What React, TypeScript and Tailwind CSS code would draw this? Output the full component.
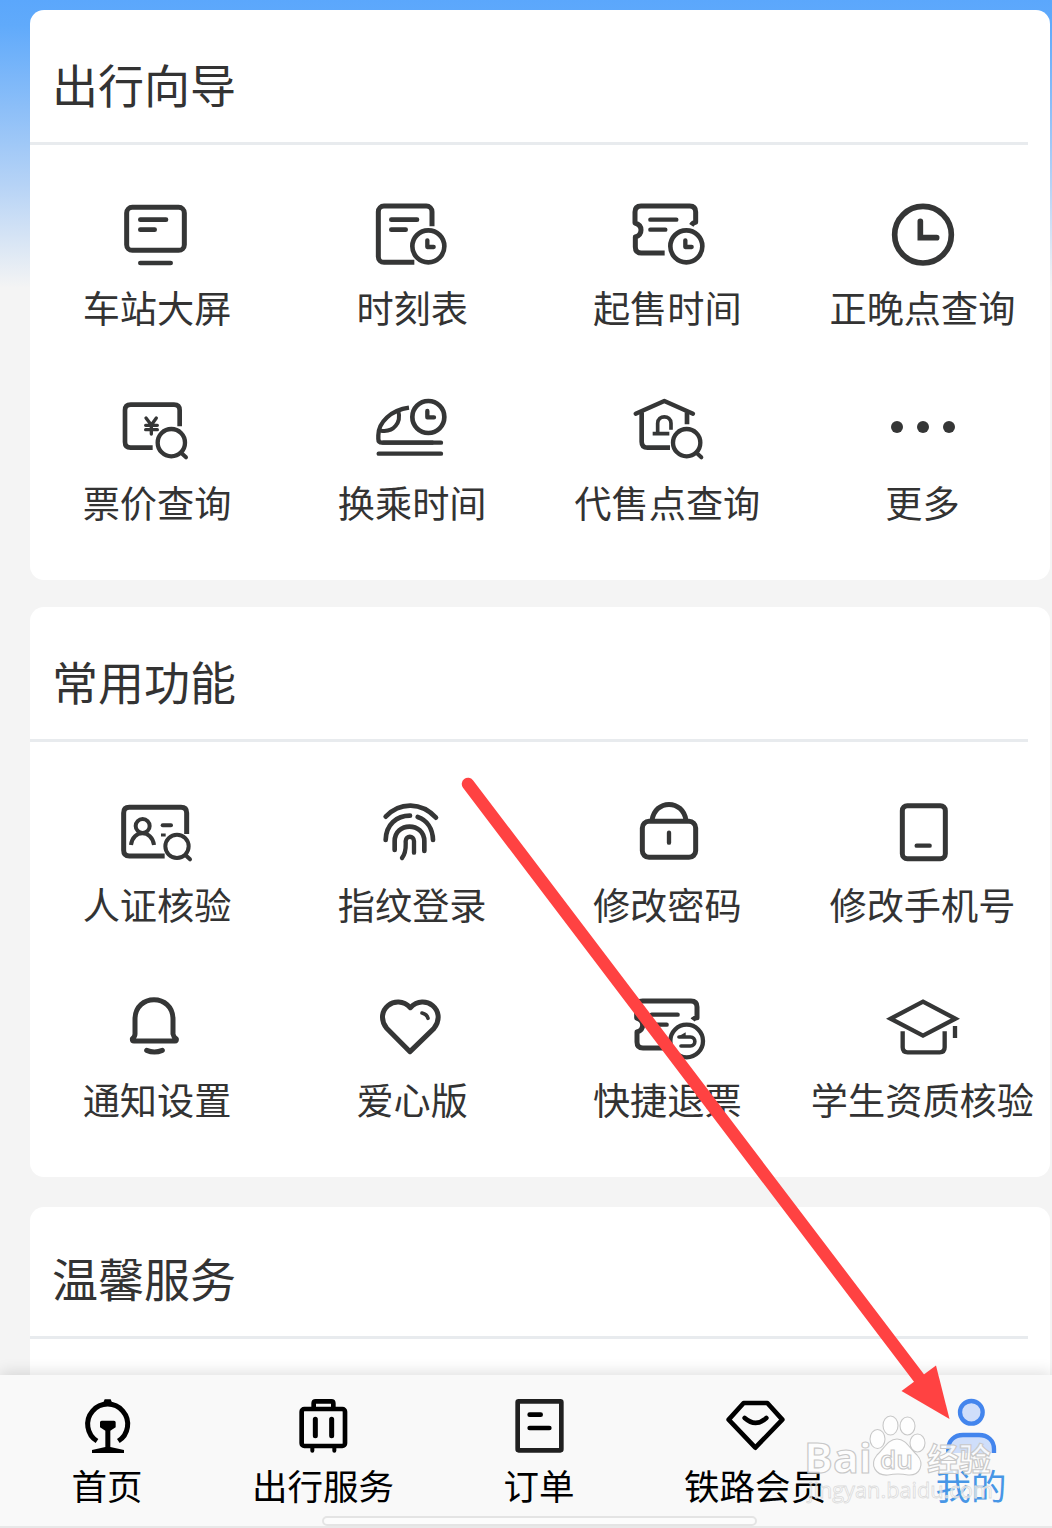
import type { ReactNode } from 'react';

type Item = { label: string; icon: ReactNode };

function Icon({ viewBox, children }: { viewBox: string; children: ReactNode }) {
  return (
    <svg
      className="h-[90px] w-24 text-[#353636]"
      viewBox={viewBox}
      fill="none"
      stroke="currentColor"
      strokeWidth="15"
      strokeLinecap="round"
      strokeLinejoin="round"
    >
      {children}
    </svg>
  );
}

const guideItems: Item[] = [
  {
    label: '车站大屏',
    icon: (
      <Icon viewBox="27 0 288 270">
        <rect x="80" y="52" width="173" height="129" rx="17" />
        <path strokeWidth="14" d="M121 89h77M121 119h43M121 219h91" />
      </Icon>
    ),
  },
  {
    label: '时刻表',
    icon: (
      <Icon viewBox="792 0 288 270">
        <path strokeLinecap="butt" d="M943 217H852a17 17 0 0 1-17-17V65a17 17 0 0 1 17-17H979a17 17 0 0 1 17 17V109" />
        <path strokeWidth="14" d="M874 89h77M874 119h43" />
        <circle cx="985" cy="169" r="48" strokeWidth="14" />
        <path strokeWidth="13" d="M982 151v20h19" />
      </Icon>
    ),
  },
  {
    label: '起售时间',
    icon: (
      <Icon viewBox="57 0 288 270">
        <path
          strokeLinecap="butt"
          d="M194 189H124q-18 0-18-18V141Q123 136 123 120T105 99V66q0-18 18-18H269q18 0 18 18V97q-8 1-13 9"
        />
        <path strokeWidth="13" d="M151 89h78M151 119h45" />
        <circle cx="259" cy="169" r="48" strokeWidth="14" />
        <path strokeWidth="13" d="M256 151v20h19" />
      </Icon>
    ),
  },
  {
    label: '正晚点查询',
    icon: (
      <Icon viewBox="823 0 288 270">
        <circle cx="970" cy="134" r="85" strokeWidth="17" />
        <path strokeWidth="17" strokeLinejoin="miter" d="M962 94v49h49" />
      </Icon>
    ),
  },
  {
    label: '票价查询',
    icon: (
      <Icon viewBox="27 0 288 270">
        <path strokeLinecap="butt" strokeWidth="14" d="M158 188H92q-17 0-17-17V76q0-17 17-17H222q17 0 17 17V124" />
        <path strokeWidth="10" d="M138 99l16 21 15-21M154 120v27M137 121h35M137 134h35" />
        <circle cx="214" cy="173" r="41" strokeWidth="13" />
        <path strokeWidth="12" d="M244 204l14 13" />
      </Icon>
    ),
  },
  {
    label: '换乘时间',
    icon: (
      <Icon viewBox="792 0 288 270">
        <path strokeLinecap="butt" strokeWidth="13" d="M927 68C873 75 835 112 835 151V162q0 11 11 11H1000" />
        <path strokeWidth="13" d="M850 173H1023M836 206H1023" />
        <path strokeWidth="12" d="M843 137C882 143 904 112 895 78" />
        <circle cx="985" cy="96" r="48" strokeWidth="14" />
        <path strokeWidth="13" d="M982 78v19h20" />
      </Icon>
    ),
  },
  {
    label: '代售点查询',
    icon: (
      <Icon viewBox="57 0 288 270">
        <path strokeWidth="13" d="M107 86L193 48L279 86" />
        <path strokeLinecap="butt" strokeWidth="14" d="M125 82V170q0 18 18 18H210M261 82V118" />
        <path strokeWidth="11" strokeLinecap="butt" d="M158 146H208M173 146V115c0-26 40-26 40 0V134" />
        <circle cx="260" cy="173" r="41" strokeWidth="13" />
        <path strokeWidth="12" d="M290 204l14 13" />
      </Icon>
    ),
  },
  {
    label: '更多',
    icon: (
      <Icon viewBox="823 0 288 270">
        <g fill="currentColor" stroke="none">
          <circle cx="892" cy="126" r="18" />
          <circle cx="970" cy="126" r="18" />
          <circle cx="1048" cy="126" r="18" />
        </g>
      </Icon>
    ),
  },
];

const commonItems: Item[] = [
  {
    label: '人证核验',
    icon: (
      <Icon viewBox="27 -9 288 270">
        <path strokeLinecap="butt" d="M194 198H88q-17 0-17-17V69q0-17 17-17H243q17 0 17 17V132" />
        <g strokeWidth="12">
          <circle cx="128" cy="108" r="21" />
          <path strokeLinecap="butt" d="M93 165C98 118 156 118 162 165" />
          <path d="M188 106h25" />
          <path strokeLinecap="butt" strokeWidth="9" d="M183 135h14" />
          <circle cx="231" cy="169" r="35" />
          <path d="M257 196l13 12" />
        </g>
      </Icon>
    ),
  },
  {
    label: '指纹登录',
    icon: (
      <Icon viewBox="792 -9 288 270">
        <g strokeWidth="14">
          <path d="M857 80C900 35 964 36 1008 83" />
          <path d="M857 150C858 103 890 77 930 77M953 81C980 90 998 115 999 150" />
          <path d="M884 180V154C884 95 973 95 973 154V183" />
          <path strokeWidth="13" d="M906 204C920 187 917 169 917 153C917 136 942 136 942 153V188" />
        </g>
      </Icon>
    ),
  },
  {
    label: '修改密码',
    icon: (
      <Icon viewBox="57 -9 288 270">
        <rect x="127" y="94" width="160" height="108" rx="20" />
        <path strokeLinecap="butt" d="M156 92C164 27 250 27 258 92" />
        <path strokeWidth="13" d="M207 128v30" />
      </Icon>
    ),
  },
  {
    label: '修改手机号',
    icon: (
      <Icon viewBox="823 -9 288 270">
        <rect x="908" y="47" width="129" height="159" rx="15" />
        <path strokeWidth="13" d="M951 167h39" />
      </Icon>
    ),
  },
  {
    label: '通知设置',
    icon: (
      <Icon viewBox="27 -9 288 270">
        <path d="M105 147V103C105 25 219 25 219 103V147Q220 155 229 162Q230 168 225 168H102Q97 168 97 162Q105 155 105 147Z" />
        <path d="M140 196Q163 206 187 196" />
      </Icon>
    ),
  },
  {
    label: '爱心版',
    icon: (
      <Icon viewBox="792 -9 288 270">
        <path d="M930 200L860 130C819 76 888 23 931 68C974 23 1043 76 1002 130Z" />
        <path strokeWidth="11" d="M966 84Q981 87 984 100" />
      </Icon>
    ),
  },
  {
    label: '快捷退票',
    icon: (
      <Icon viewBox="57 -9 288 270">
        <path
          strokeLinecap="butt"
          d="M198 189H129q-18 0-18-18V141Q128 136 128 120T110 99V66q0-18 18-18H273q18 0 18 18V98q-8 0-13 7"
        />
        <path strokeWidth="13" d="M155 89h78M155 119h45" />
        <circle cx="260" cy="168" r="49" strokeWidth="13" />
        <path strokeWidth="11" d="M237 156H271C289 156 289 183 271 183H243" />
        <path fill="currentColor" stroke="none" d="M231 157L257 142V157Z" />
      </Icon>
    ),
  },
  {
    label: '学生资质核验',
    icon: (
      <Icon viewBox="823 -9 288 270">
        <g strokeLinecap="butt" strokeWidth="13">
          <path strokeLinejoin="miter" d="M970 50L1067 101L970 152L873 101Z" />
          <path d="M909 139V187q0 15 15 15H1020q15 0 15-15V139M1066 123V159" />
        </g>
      </Icon>
    ),
  },
];

function NavIcon({ viewBox, children }: { viewBox: string; children: ReactNode }) {
  return (
    <svg
      className="h-[70px] w-20"
      viewBox={viewBox}
      fill="none"
      stroke="currentColor"
      strokeWidth="15"
      strokeLinecap="round"
      strokeLinejoin="round"
    >
      {children}
    </svg>
  );
}

const tabs: Item[] = [
  {
    label: '首页',
    icon: (
      <NavIcon viewBox="51 84 240 210">
        <path strokeLinecap="butt" d="M141 243A60 60 0 1 1 205 243" />
        <path
          fill="currentColor"
          stroke="none"
          d="M158 132L164 118H182L188 132ZM150 187q0-5 5-5H192q5 0 5 5V202L181 212V261L222 270V279H126V270L166 261V212L150 202Z"
        />
      </NavIcon>
    ),
  },
  {
    label: '出行服务',
    icon: (
      <NavIcon viewBox="699 84 240 210">
        <rect x="755" y="147" width="130" height="111" rx="8" strokeWidth="14" />
        <path strokeLinecap="butt" strokeWidth="14" d="M791 144V130q0-6 6-6H844q6 0 6 6V144" />
        <path d="M796 178v49M845 178v49" />
        <path strokeWidth="12" d="M787 264v8M853 264v8" />
      </NavIcon>
    ),
  },
  {
    label: '订单',
    icon: (
      <NavIcon viewBox="57 84 240 210">
        <rect x="113" y="124" width="131" height="147" rx="3" strokeWidth="14" className="text-[#202020]" />
        <path strokeWidth="14" d="M149 164h33M149 204h59" />
      </NavIcon>
    ),
  },
  {
    label: '铁路会员',
    icon: (
      <NavIcon viewBox="705 84 240 210">
        <path strokeWidth="14" d="M791 129H862L907 179L826 263L746 179Z" />
        <path strokeWidth="14" d="M794 174Q827 203 859 174" />
      </NavIcon>
    ),
  },
  {
    label: '我的',
    icon: (
      <NavIcon viewBox="423 114 240 210">
        <g strokeLinecap="butt" strokeWidth="13" className="text-[#4385ed]" stroke="currentColor" fill="#cfdefa">
          <circle cx="544" cy="187" r="34" />
          <path d="M475 309V297C475 271 494 255 519 255H567C593 255 612 271 612 297V309" />
        </g>
      </NavIcon>
    ),
  },
];

function Card({ title, items, compact = false }: { title: string; items: Item[]; compact?: boolean }) {
  return (
    <section className="h-[570px] w-[1020.5px] shrink-0 rounded-[14px] bg-white">
      <div className={`flex items-center pl-[22.5px] ${compact ? 'h-[129px] pt-[10px]' : 'h-[132px] pt-[13px]'}`}>
        <h2 className="text-[46px] leading-[60px] text-[#333]">{title}</h2>
      </div>
      <div className="mr-[22px] h-[3px] bg-[#e8ebee]" />
      <div className="grid grid-cols-4 gap-y-[45px] py-[45px]">
        {items.map((item) => (
          <div key={item.label} className="flex flex-col items-center">
            {item.icon}
            <span className="-mt-[3px] mb-[3px] text-[37.2px] leading-[60px] whitespace-nowrap text-[#333]">
              {item.label}
            </span>
          </div>
        ))}
      </div>
    </section>
  );
}

function TabBar() {
  return (
    <nav className="relative h-[153px] shrink-0 border-b-2 border-[#e8e8e8] bg-[#f9f9f9] shadow-[0_-3px_14px_rgba(0,0,0,0.12)]">
      <div className="-ml-px grid w-[1080px] grid-cols-5 pt-[13px]">
        {tabs.map((tab) => (
          <button key={tab.label} className="flex flex-col items-center text-black">
            {tab.icon}
            <span
              className={`-mt-[3px] text-[35.5px] leading-[60px] ${tab.label === '我的' ? 'text-[#4796e6]' : ''}`}
            >
              {tab.label}
            </span>
          </button>
        ))}
      </div>
      {/* Home indicator */}
      <div className="absolute bottom-0 left-[322px] h-[10px] w-[435px] rounded-full border-2 border-[#e4e4e4] bg-[#fcfcfc]" />
    </nav>
  );
}

function Watermark() {
  return (
    <svg
      className="absolute top-[1400px] left-[800px] h-[110px] w-[210px]"
      viewBox="800 1400 210 110"
      fill="#fff"
      fillOpacity="0.8"
      stroke="#c8c8c8"
      strokeWidth="1.1"
      fontFamily="'Open Sans', 'Noto Sans CJK SC', sans-serif"
    >
      <text x="804" y="1473" fontSize="41" fontWeight="700" textLength="68" lengthAdjust="spacingAndGlyphs">
        Bai
      </text>
      <ellipse cx="877.5" cy="1439" rx="7.5" ry="9.5" />
      <ellipse cx="890.5" cy="1425.5" rx="7.5" ry="9.5" />
      <ellipse cx="907.5" cy="1426" rx="7.5" ry="9" />
      <ellipse cx="917.5" cy="1443" rx="7.5" ry="9" />
      <path d="M897 1439C888 1439 884 1449 877 1455C869 1465 876 1476 888 1475Q898 1473 908 1475C920 1476 925 1464 917 1455C910 1449 906 1439 897 1439Z" />
      <text x="880" y="1469" fontSize="25" fontWeight="600" textLength="33" lengthAdjust="spacingAndGlyphs">
        du
      </text>
      <text x="927" y="1471" fontSize="32" fontWeight="700" textLength="64">
        经验
      </text>
      <text
        x="808"
        y="1498"
        fontSize="21.5"
        strokeWidth="0.8"
        fillOpacity="0.6"
        stroke="#dcdcdc"
        textLength="185"
        lengthAdjust="spacingAndGlyphs"
      >
        jingyan.baidu.com
      </text>
    </svg>
  );
}

export default function App() {
  return (
    <div className="relative flex h-[1528px] w-[1052px] flex-col overflow-hidden bg-[#f4f4f4] font-['Noto_Sans_CJK_SC',sans-serif]">
      <main className="flex min-h-0 flex-1 flex-col overflow-hidden bg-[linear-gradient(180deg,#5ba7fc_0px,#60aafb_25px,#8dbff8_110px,#b6d3f6_185px,#f4f4f4_288px)] pt-[10px] pl-[29.5px]">
        <Card title="出行向导" items={guideItems} />
        <div className="h-[27px] shrink-0" />
        <Card title="常用功能" items={commonItems} />
        <div className="h-[30px] shrink-0" />
        <Card title="温馨服务" items={[]} compact />
      </main>
      <TabBar />
      <Watermark />
      {/* Pointer to the profile tab */}
      <svg className="pointer-events-none absolute inset-0 h-full w-full" viewBox="0 0 1052 1528">
        <path d="M468 784L922 1382" stroke="#ff4242" strokeWidth="12.5" strokeLinecap="round" />
        <path d="M901.5 1391L936 1365.5L949.5 1419Z" fill="#ff4242" />
      </svg>
    </div>
  );
}
